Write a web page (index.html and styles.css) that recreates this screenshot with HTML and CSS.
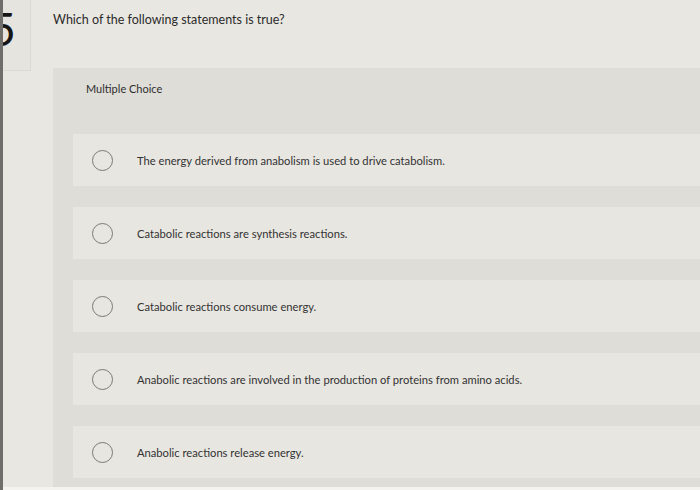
FILE: index.html
```html
<html>
    <head>
        <title>Question 5</title>
        <link rel="stylesheet" href="styles.css">
    </head>
    <body>
        <div class="page">
            <div class="num"><span>5</span></div>
            <div class="main">
                <div class="question">Which of the following statements is true?</div>
                <div class="panel">
                    <div class="kind">Multiple Choice</div>
                    <div class="choices">
                        <div class="choice">
                            <div class="radio"></div>
                            <div class="label">The energy derived from anabolism is used to drive catabolism.</div>
                        </div>
                        <div class="choice">
                            <div class="radio"></div>
                            <div class="label">Catabolic reactions are synthesis reactions.</div>
                        </div>
                        <div class="choice">
                            <div class="radio"></div>
                            <div class="label">Catabolic reactions consume energy.</div>
                        </div>
                        <div class="choice">
                            <div class="radio"></div>
                            <div class="label">Anabolic reactions are involved in the production of proteins from amino acids.</div>
                        </div>
                        <div class="choice">
                            <div class="radio"></div>
                            <div class="label">Anabolic reactions release energy.</div>
                        </div>
                    </div>
                </div>
            </div>
        </div>
        <div class="bottom"></div>
    </body>
</html>
```

FILE: styles.css
```css
body{
    margin: 0px;
    background-color: #e9e7e2;
    border-left: 3px solid #6f6e6a;
    font-family: Lato, "Open Sans", sans-serif;
    color: #2b2b2b;
    height: 490px;
    box-sizing: border-box;
    overflow: hidden;
    display: flex;
    flex-direction: column;
}
    .page{
        display: flex;
        flex: 1;
    }
    .num{
        width: 27px;
        height: 70px;
        flex-shrink: 0;
        border-right: 1px solid #dbd9d4;
        border-bottom: 1px solid #dbd9d4;
        display: flex;
        justify-content: flex-end;
        overflow: hidden;
        background-color: #e6e4df;
    }
    .num span{
        font-size: 46px;
        line-height: 46px;
        margin-top: 6px;
        margin-right: 14px;
        color: #161616;
    }
    .main{
        flex: 1;
        margin-left: 22px;
        display: flex;
        flex-direction: column;
    }
    .question{
        font-size: 12.5px;
        padding-top: 12px;
        height: 68px;
        flex-shrink: 0;
        box-sizing: border-box;
    }
    .panel{
        flex: 1;
        background-color: #dfddd8;
        padding-left: 20px;
    }
    .kind{
        font-size: 11px;
        padding-left: 13px;
        height: 66px;
        box-sizing: border-box;
        padding-top: 14px;
        color: #2e2e2e;
    }
    .choices{
        display: flex;
        flex-direction: column;
        gap: 21px;
    }
    .choice{
        height: 52px;
        background-color: #e8e6e1;
        display: flex;
        align-items: center;
        padding-left: 19px;
    }
    .radio{
        width: 19px;
        height: 19px;
        border: 1.5px solid #7a7976;
        border-radius: 50%;
        flex-shrink: 0;
    }
    .label{
        margin-left: 24px;
        font-size: 11.2px;
        color: #333;
    }
    .bottom{
        height: 3px;
        background-color: #f4f3f0;
    }
```
